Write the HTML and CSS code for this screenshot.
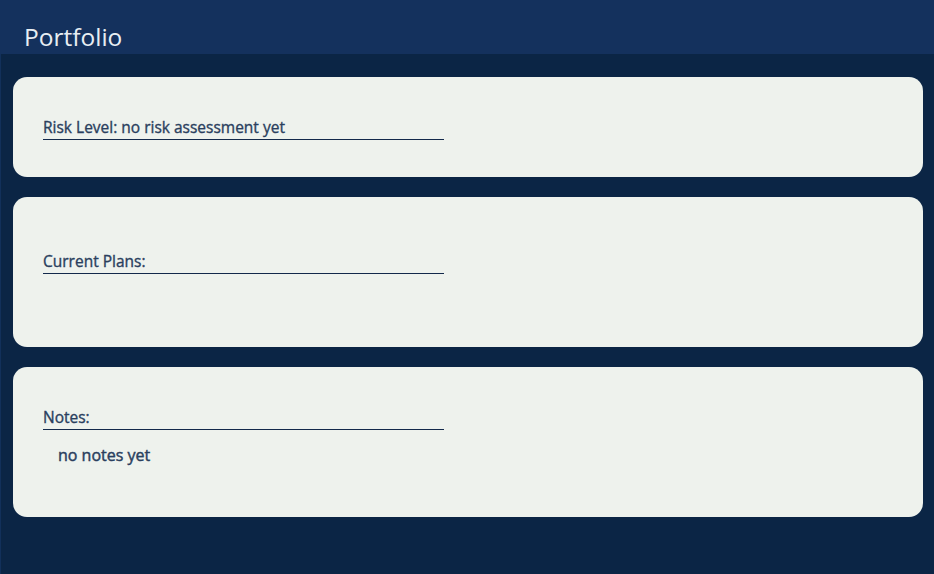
FILE: index.html
```html
<!DOCTYPE html>
<html>
<head>
<meta charset="utf-8">
<link rel="stylesheet" href="styles.css">
</head>
<body>
<header class="topbar"><h1 class="title">Portfolio</h1></header>
<main class="content">
  <section class="card card-short">
    <h2 class="label">Risk Level: no risk assessment yet</h2>
  </section>
  <section class="card card-tall card-plans">
    <h2 class="label">Current Plans:</h2>
  </section>
  <section class="card card-tall">
    <h2 class="label">Notes:</h2>
    <p class="note">no notes yet</p>
  </section>
</main>
</body>
</html>
```
FILE: styles.css
```css
html, body {
  margin: 0;
  padding: 0;
  height: 100%;
}
body {
  background: #0b2545;
  font-family: "Open Sans", "Noto Sans", sans-serif;
  display: flex;
  flex-direction: column;
}
.topbar {
  height: 54px;
  background: #14315d;
  display: flex;
  align-items: flex-end;
  padding-left: 24px;
}
.title {
  margin: 0 0 1px 0;
  font-weight: 400;
  font-size: 24.5px;
  line-height: 32px;
  color: #e8eef3;
}
.content {
  flex: 1;
  border-left: 1px solid #12305a;
  padding: 23px 11px 0 12px;
  display: flex;
  flex-direction: column;
  gap: 20px;
}
.card {
  background: #eef2ed;
  border-radius: 14px;
  box-sizing: border-box;
  padding: 30px 30px 0 30px;
}
.card-short { height: 100px; }
.card-tall { height: 150px; }
.card-plans { padding-top: 44px; }
.label {
  margin: 0;
  width: 401px;
  padding: 10px 0 2px 0;
  font-size: 15.5px;
  line-height: 20px;
  font-weight: 400;
  color: #2a3f5e;
  -webkit-text-stroke: 0.35px #2a3f5e;
  border-bottom: 1.5px solid #13294b;
}
.note {
  margin: 15px 0 0 15px;
  font-size: 16px;
  line-height: 20px;
  font-weight: 400;
  color: #2a3f5e;
  -webkit-text-stroke: 0.45px #2a3f5e;
}
```
